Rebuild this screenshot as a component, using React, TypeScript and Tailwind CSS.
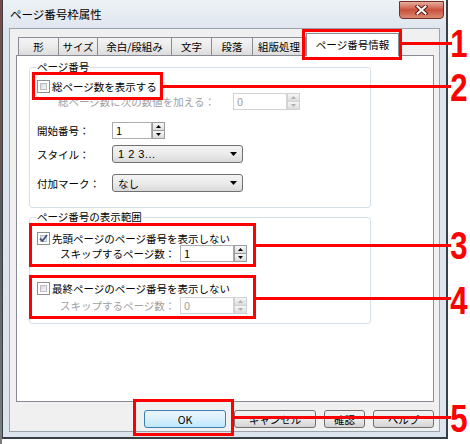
import React from "react";

function Tri({ up, disabled }: { up?: boolean; disabled?: boolean }) {
  return (
    <svg width="5" height="3" viewBox="0 0 5 3">
      <path d={up ? "M0 3 L2.5 0 L5 3Z" : "M0 0 L5 0 L2.5 3Z"} fill={disabled ? "#b0b0b0" : "#000"} />
    </svg>
  );
}

function Spinner({ disabled }: { disabled?: boolean }) {
  const b = disabled ? "border-[#d2d2d2]" : "border-[#9c9c9c]";
  return (
    <div className="flex flex-col w-[13px] h-full">
      <div className={`h-[9px] flex items-center justify-center border bg-linear-to-b from-[#f6f6f6] to-[#dcdcdc] ${b}`}>
        <Tri up disabled={disabled} />
      </div>
      <div className={`h-[9px] -mt-px flex items-center justify-center border bg-linear-to-b from-[#f6f6f6] to-[#dcdcdc] ${b}`}>
        <Tri disabled={disabled} />
      </div>
    </div>
  );
}

function Spin({ value, inputW, disabled }: { value: string; inputW: string; disabled?: boolean }) {
  return (
    <div className="flex h-[17px]">
      <div
        className={`${inputW} h-full border bg-white flex items-center pl-[3px] text-[11px] leading-[13px] ${
          disabled ? "border-[#d0d2d6] text-[#a0a0a0]" : "border-[#abadb3] text-black"
        }`}
      >
        {value}
      </div>
      <Spinner disabled={disabled} />
    </div>
  );
}

function Combo({ text, latin }: { text: string; latin?: boolean }) {
  return (
    <div className="w-[131px] h-[18px] rounded-[3px] border border-[#707070] bg-linear-to-b from-[#f3f3f3] via-[#ebebeb] to-[#d9d9d9] flex items-center justify-between pl-[5px] pr-[5px]">
      <span
        className={`leading-[13px] ${
          latin ? "text-[11px] font-['Liberation_Sans',sans-serif] tracking-[0.5px]" : "text-[10.5px]"
        }`}
      >
        {text}
      </span>
      <svg width="7" height="4" viewBox="0 0 7 4">
        <path d="M0 0H7L3.5 4Z" fill="#000" />
      </svg>
    </div>
  );
}

function Check({ checked, disabled }: { checked?: boolean; disabled?: boolean }) {
  return (
    <div className={`relative w-[13px] h-[13px] border bg-white p-[2px] shrink-0 ${disabled ? "border-[#b8b8b8]" : "border-[#8e8f8f]"}`}>
      <div className="w-full h-full border border-[#b9bcc2] bg-linear-to-br from-[#d6d8dc] to-[#fbfbfb]" />
      {checked && (
        <svg className="absolute left-0 top-0" width="11" height="11" viewBox="0 0 11 11">
          <path d="M2 5.5 L4.5 8 L9 2" stroke="#3e5383" strokeWidth="1.8" fill="none" />
        </svg>
      )}
    </div>
  );
}

function Btn({ label, w, primary }: { label: string; w: string; primary?: boolean }) {
  return (
    <div
      className={`${w} h-[18px] rounded-[3px] border flex items-center justify-center text-[10.5px] leading-[13px] ${
        primary
          ? "border-[#3c7fb1] bg-linear-to-b from-[#eaf6fd] via-[#d9f0fc] to-[#bee6fd]"
          : "border-[#707070] bg-linear-to-b from-[#f2f2f2] via-[#ebebeb] to-[#d3d3d3]"
      }`}
    >
      {label}
    </div>
  );
}

const tabs = [
  { label: "形", w: "w-[41px]" },
  { label: "サイズ", w: "w-[40px]" },
  { label: "余白/段組み", w: "w-[75px]" },
  { label: "文字", w: "w-[41px]" },
  { label: "段落", w: "w-[42px]" },
  { label: "組版処理", w: "w-[54px]" },
];

export default function App() {
  return (
    <div className="relative w-[470px] h-[444px] bg-white overflow-hidden flex font-['Noto_Sans_CJK_JP',sans-serif] text-black">
      <div className="w-[2px] h-full bg-linear-to-b from-[#7a4a4a] via-[#5a5a5a] to-[#7c7c7c]" />
      <div className="w-[446px] h-[439px] border-l border-r-2 border-b-2 border-[#3a3f45] bg-[#dce4ed] flex flex-col">
        {/* title bar */}
        <div className="h-[28px] flex items-start justify-between bg-linear-to-b from-[#eef2f6] to-[#dfe6ee]">
          <div className="pl-[7px] pt-[7px] text-[11.5px] leading-[15px]">ページ番号枠属性</div>
          <div className="mt-[1px] mr-[2px] w-[45px] h-[18px] rounded-b-[4px] border border-[#7a2e22] bg-linear-to-b from-[#e6ad9f] via-[#c9503c] to-[#d98a74] flex items-center justify-center">
            <svg width="13" height="10" viewBox="0 0 13 10">
              <path d="M2.5 1.5 L10.5 8.5 M10.5 1.5 L2.5 8.5" stroke="#5a1e16" strokeWidth="4" strokeLinecap="square" />
              <path d="M2.5 1.5 L10.5 8.5 M10.5 1.5 L2.5 8.5" stroke="#ffffff" strokeWidth="2" strokeLinecap="square" />
            </svg>
          </div>
        </div>
        {/* body */}
        <div className="ml-[6px] mr-[6px] h-[404px] border border-[#9aa4b0] bg-[#f0f0f0] flex flex-col pl-[6px] pr-[5px] pt-[4px]">
          {/* tabs */}
          <div className="h-[22px] flex items-end pl-[2px]">
            {tabs.map((t, i) => (
              <div
                key={t.label}
                className={`${t.w} h-[18px] ${i === 0 ? "" : "-ml-px"} border border-b-0 border-[#898c95] bg-linear-to-b from-[#f4f4f4] via-[#ebebeb] to-[#dcdcdc] flex items-center justify-center text-[10.5px] leading-[13px]`}
              >
                {t.label}
              </div>
            ))}
            <div className="relative z-10 w-[93px] h-[23px] -mb-px border border-b-0 border-[#898c95] bg-white flex items-center justify-center text-[10.5px] leading-[13px] pb-[2px]">
              ページ番号情報
            </div>
          </div>
          {/* panel */}
          <div className="w-[418px] h-[347px] border border-[#898c95] bg-white pl-[12px] pt-[11px]">
            {/* group 1 */}
            <div className="relative w-[342px] h-[141px] border border-[#d5dfe5] rounded-[3px] flex flex-col text-[10.5px] leading-[13px]">
              <span className="absolute -top-[8px] left-[6px] bg-white px-[1px] leading-[13px]">ページ番号</span>
              <div className="mt-[12px] h-[13px] flex items-center gap-[2px] pl-[7px]">
                <Check />
                <span>総ページ数を表示する</span>
              </div>
              <div className="h-[17px] flex items-center pl-[28px]">
                <span className="w-[175px] text-[#a0a0a0]">総ページ数に次の数値を加える：</span>
                <Spin value="0" inputW="w-[54px]" disabled />
              </div>
              <div className="mt-[12px] h-[17px] flex items-center pl-[7px]">
                <span className="w-[75px]">開始番号：</span>
                <Spin value="1" inputW="w-[40px]" />
              </div>
              <div className="mt-[6px] h-[18px] flex items-center pl-[7px]">
                <span className="w-[75px]">スタイル：</span>
                <Combo text="1 2 3..." latin />
              </div>
              <div className="mt-[11px] h-[18px] flex items-center pl-[7px]">
                <span className="w-[75px]">付加マーク：</span>
                <Combo text="なし" />
              </div>
            </div>
            {/* group 2 */}
            <div className="relative mt-[9px] w-[342px] h-[107px] border border-[#d5dfe5] rounded-[3px] flex flex-col text-[10.5px] leading-[13px]">
              <span className="absolute -top-[8px] left-[6px] bg-white px-[1px] leading-[13px]">ページ番号の表示範囲</span>
              <div className="mt-[14px] h-[13px] flex items-center gap-[2px] pl-[7px]">
                <Check checked />
                <span>先頭ページのページ番号を表示しない</span>
              </div>
              <div className="h-[17px] flex items-center pl-[30px]">
                <span className="w-[120px]">スキップするページ数：</span>
                <Spin value="1" inputW="w-[54px]" />
              </div>
              <div className="mt-[20px] h-[13px] flex items-center gap-[2px] pl-[7px]">
                <Check />
                <span>最終ページのページ番号を表示しない</span>
              </div>
              <div className="mt-[2px] h-[17px] flex items-center pl-[30px]">
                <span className="w-[120px] text-[#a0a0a0]">スキップするページ数：</span>
                <Spin value="0" inputW="w-[54px]" disabled />
              </div>
            </div>
          </div>
          {/* buttons */}
          <div className="mt-[8px] w-[418px] flex justify-end gap-[8px]">
            <Btn label="OK" w="w-[82px]" primary />
            <Btn label="キャンセル" w="w-[82px]" />
            <Btn label="確認" w="w-[41px]" />
            <Btn label="ヘルプ" w="w-[61px]" />
          </div>
        </div>
      </div>

      {/* annotations */}
      <div className="absolute left-[302px] top-[29px] w-[100px] h-[31px] border-[3px] border-[#ff0000]" />
      <div className="absolute left-[32px] top-[72px] w-[131px] h-[28px] border-[3px] border-[#ff0000]" />
      <div className="absolute left-[29px] top-[223px] w-[227px] h-[44px] border-[3px] border-[#ff0000]" />
      <div className="absolute left-[29px] top-[275px] w-[227px] h-[44px] border-[3px] border-[#ff0000]" />
      <div className="absolute left-[133px] top-[399px] w-[101px] h-[37px] border-[3px] border-[#ff0000]" />

      <div className="absolute left-[401px] top-[42px] w-[51px] h-[3px] bg-[#ff0000]" />
      <div className="absolute left-[163px] top-[85px] w-[288px] h-[3px] bg-[#ff0000]" />
      <div className="absolute left-[255px] top-[244px] w-[196px] h-[3px] bg-[#ff0000]" />
      <div className="absolute left-[255px] top-[297px] w-[196px] h-[3px] bg-[#ff0000]" />
      <div className="absolute left-[233px] top-[416px] w-[218px] h-[3px] bg-[#ff0000]" />

      <div className="absolute left-[448px] top-[25px] w-[22px] text-center text-[38px] leading-none font-bold text-[#ff0000] font-['Liberation_Sans',sans-serif] scale-x-[0.82]">1</div>
      <div className="absolute left-[448px] top-[69px] w-[22px] text-center text-[38px] leading-none font-bold text-[#ff0000] font-['Liberation_Sans',sans-serif] scale-x-[0.82]">2</div>
      <div className="absolute left-[448px] top-[227px] w-[22px] text-center text-[38px] leading-none font-bold text-[#ff0000] font-['Liberation_Sans',sans-serif] scale-x-[0.82]">3</div>
      <div className="absolute left-[448px] top-[282px] w-[22px] text-center text-[38px] leading-none font-bold text-[#ff0000] font-['Liberation_Sans',sans-serif] scale-x-[0.82]">4</div>
      <div className="absolute left-[448px] top-[400px] w-[22px] text-center text-[38px] leading-none font-bold text-[#ff0000] font-['Liberation_Sans',sans-serif] scale-x-[0.82]">5</div>
    </div>
  );
}
